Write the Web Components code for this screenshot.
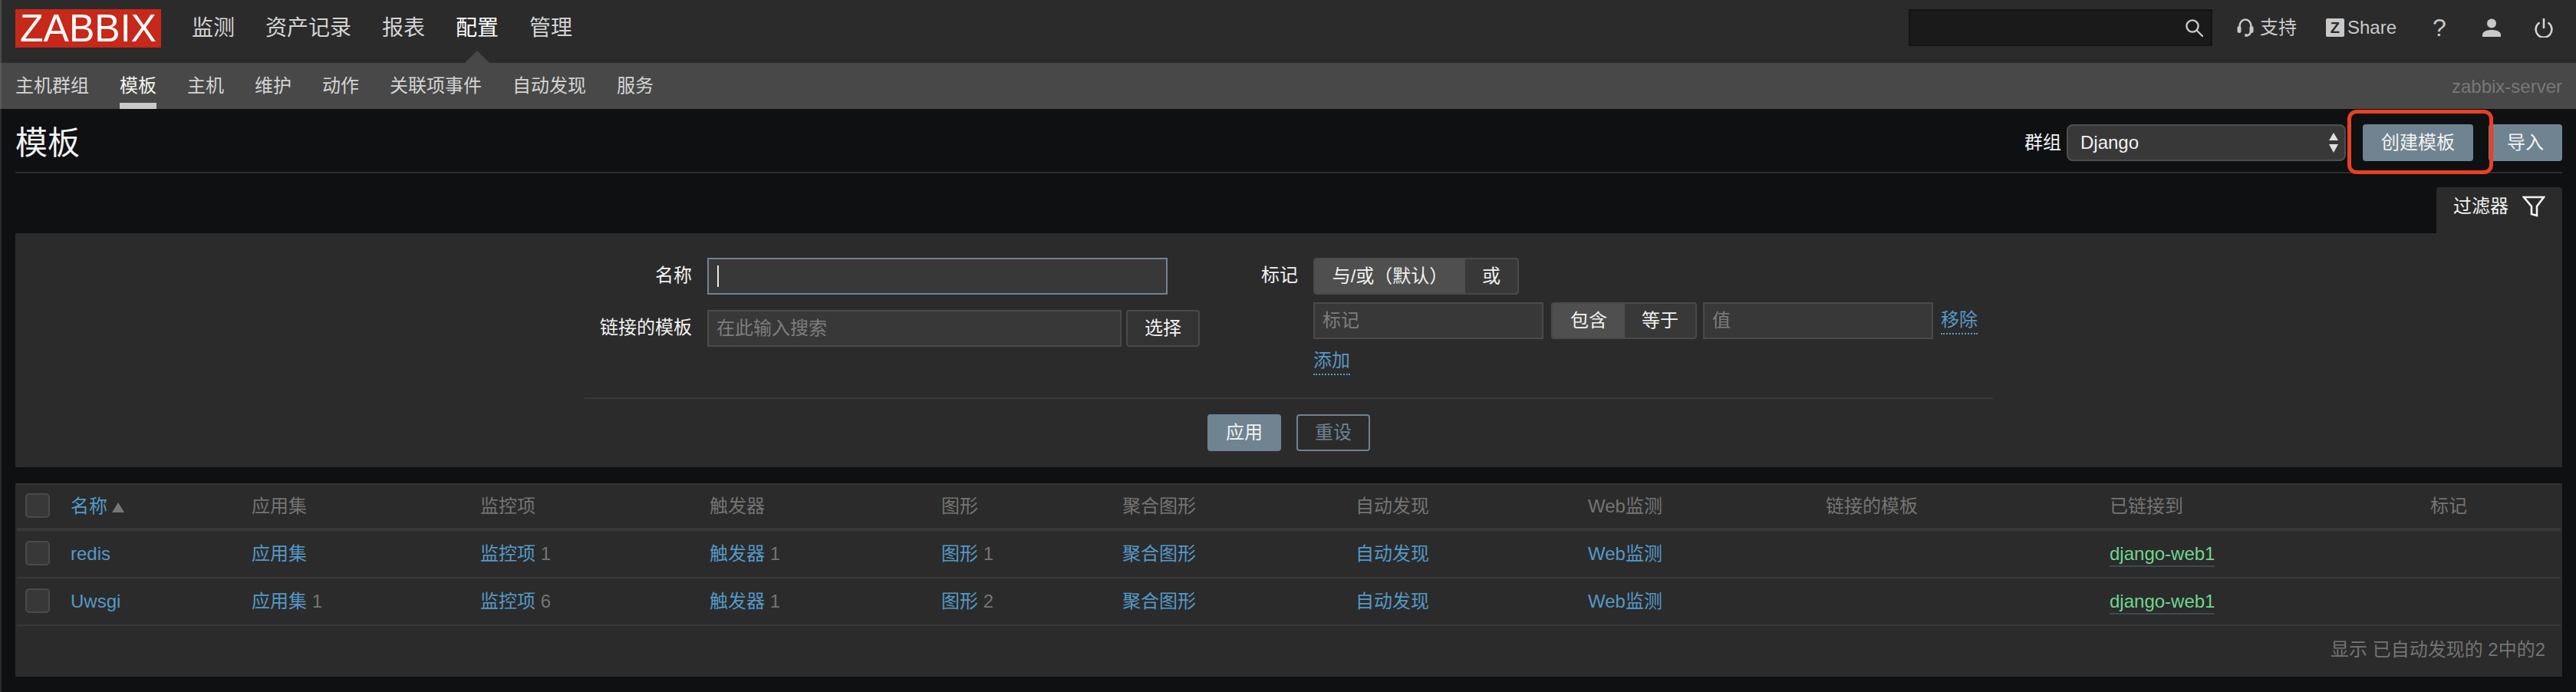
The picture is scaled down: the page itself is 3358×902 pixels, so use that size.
<!DOCTYPE html>
<html lang="zh">
<head>
<meta charset="utf-8">
<title>模板</title>
<style>
  html, body { margin: 0; padding: 0; background: #0e1012; }
  body {
    width: 3358px;
    font: 24px/32px "Liberation Sans", "Noto Sans CJK SC", sans-serif;
    color: #f2f2f2;
  }
</style>
</head>
<body>
<zbx-topbar>
  <zbx-menu-item>监测</zbx-menu-item>
  <zbx-menu-item>资产记录</zbx-menu-item>
  <zbx-menu-item>报表</zbx-menu-item>
  <zbx-menu-item active>配置</zbx-menu-item>
  <zbx-menu-item>管理</zbx-menu-item>
</zbx-topbar>
<zbx-subbar>
  <zbx-sub-item>主机群组</zbx-sub-item>
  <zbx-sub-item active>模板</zbx-sub-item>
  <zbx-sub-item>主机</zbx-sub-item>
  <zbx-sub-item>维护</zbx-sub-item>
  <zbx-sub-item>动作</zbx-sub-item>
  <zbx-sub-item>关联项事件</zbx-sub-item>
  <zbx-sub-item>自动发现</zbx-sub-item>
  <zbx-sub-item>服务</zbx-sub-item>
</zbx-subbar>
<zbx-page>
  <zbx-page-header></zbx-page-header>
  <zbx-filter></zbx-filter>
  <zbx-templates></zbx-templates>
</zbx-page>

<script>
class ZbxButton extends HTMLElement {
    constructor() {
        super();
        this.attachShadow({mode: "open"}).innerHTML = `
          <style>
            :host { display: block; width: 96px; height: 48px; box-sizing: border-box; border-radius: 4px;
                    background: #6f8391; color: #f2f2f2; text-align: center; line-height: 47px; }
            :host([wide]) { width: 144px; }
            :host([outline]) { background: transparent; border: 2px solid #6f8391; color: #6f8391; line-height: 43px; }
            :host([plain]) { background: #333; border: 2px solid #4a4a4a; line-height: 43px; }
          </style><slot></slot>`;
    }
}
customElements.define("zbx-button", ZbxButton);

class ZbxInput extends HTMLElement {
    constructor() {
        super();
        this.attachShadow({mode: "open"}).innerHTML = `
          <style>
            :host { display: block; height: 48px; box-sizing: border-box; border: 2px solid #4a4a4a; background: #383838;
                    color: #7e7e7e; padding-left: 10px; line-height: 43px; }
            :host([focused]) { border-color: #6f8391; }
            .caret { display: none; width: 2px; height: 28px; background: #e8e8e8; margin: 8px 0 0 1px; }
            :host([focused]) .caret { display: block; }
          </style><div class="caret"></div><slot></slot>`;
    }
}
customElements.define("zbx-input", ZbxInput);

class ZbxSegment extends HTMLElement {
    constructor() {
        super();
        this.attachShadow({mode: "open"}).innerHTML = `
          <style>
            :host { display: flex; height: 48px; box-sizing: border-box; border: 2px solid #4a4a4a; border-radius: 4px;
                    background: #383838; overflow: hidden; }
          </style><slot></slot>`;
    }
}
customElements.define("zbx-segment", ZbxSegment);

class ZbxSegmentItem extends HTMLElement {
    constructor() {
        super();
        this.attachShadow({mode: "open"}).innerHTML = `
          <style>
            :host { display: block; text-align: center; line-height: 43px; color: #f2f2f2; }
            :host([active]) { background: #4f4f4f; }
          </style><slot></slot>`;
    }
}
customElements.define("zbx-segment-item", ZbxSegmentItem);

class ZbxCheckbox extends HTMLElement {
    constructor() {
        super();
        this.attachShadow({mode: "open"}).innerHTML = `
          <style>
            :host { display: block; width: 32px; height: 32px; box-sizing: border-box; border: 2px solid #4a4a4a;
                    border-radius: 5px; background: #383838; }
          </style>`;
    }
}
customElements.define("zbx-checkbox", ZbxCheckbox);

class ZbxMenuItem extends HTMLElement {
    constructor() {
        super();
        this.attachShadow({mode: "open"}).innerHTML = `
          <style>
            :host { display: block; font-size: 28px; color: #d4d4d4; line-height: 73px; }
            :host([active]) { color: #fff; position: relative; }
            :host([active])::after { content: ""; position: absolute; left: 12px; top: 66px;
                    border: solid transparent; border-width: 0 16px 16px; border-bottom-color: #484848; }
          </style><slot></slot>`;
    }
}
customElements.define("zbx-menu-item", ZbxMenuItem);

class ZbxTopbar extends HTMLElement {
    constructor() {
        super();
        this.attachShadow({mode: "open"}).innerHTML = `
          <style>
            :host { display: flex; height: 82px; box-sizing: border-box; background: #2b2b2b; border-left: 2px solid #4a4a4a; }
            .logo { width: 190px; height: 50px; margin: 12px 0 0 18px; background: #c7281a; color: #fff;
                    font: 50px/51px "Liberation Sans", sans-serif; text-align: center; }
            nav { display: flex; gap: 40px; margin-left: 40px; }
            .tools { display: flex; align-items: flex-start; margin-left: auto; padding-right: 30px; color: #c9c9c9; }
            .search { width: 396px; height: 48px; margin-top: 12px; box-sizing: border-box; background: #1a1a1a;
                      border: 2px solid #141414; display: flex; justify-content: flex-end; align-items: center; padding-right: 10px; }
            svg { display: block; }
            .tool { display: flex; align-items: center; height: 72px; }
            .zbox { width: 24px; height: 24px; background: #c9c9c9; color: #2b2b2b; border-radius: 2px; text-align: center;
                    font-weight: bold; font-size: 20px; line-height: 25px; }
            .q { width: 24px; justify-content: center; font-size: 32px; color: #c9c9c9; }
          </style>
          <div class="logo">ZABBIX</div>
          <nav><slot></slot></nav>
          <div class="tools">
            <div class="search">
              <svg width="24" height="24" viewBox="0 0 24 24" fill="none" stroke="#c9c9c9" stroke-width="2.4"><circle cx="10" cy="10" r="7.6"/><path d="M15.5 15.5 L23 23" stroke-linecap="round"/></svg>
            </div>
            <div class="tool" style="margin-left:32px;gap:8px">
              <svg width="22" height="24" viewBox="0 0 22 24" fill="none" stroke="#c9c9c9" stroke-width="2.6"><path d="M3.5 13 V10 a7.5 8.5 0 0 1 15 0 V14 c0 6-3 8-6 8.5"/><rect x="0.5" y="10" width="5" height="9" rx="2.5" fill="#c9c9c9" stroke="none"/><rect x="16.5" y="10" width="5" height="9" rx="2.5" fill="#c9c9c9" stroke="none"/><circle cx="12" cy="22" r="2" fill="#c9c9c9" stroke="none"/></svg>
              <span>支持</span>
            </div>
            <div class="tool" style="margin-left:38px;gap:4px"><div class="zbox">Z</div><span>Share</span></div>
            <div class="tool q" style="margin-left:44px">?</div>
            <div class="tool" style="margin-left:44px">
              <svg width="24" height="24" viewBox="0 0 24 24" fill="#c9c9c9"><circle cx="12" cy="6.5" r="6"/><path d="M0 24 V21.5 C0 17 6 15 12 15 S24 17 24 21.5 V24 Z"/></svg>
            </div>
            <div class="tool" style="margin-left:44px">
              <svg width="24" height="26" viewBox="0 0 24 26" fill="none" stroke="#d4d4d4" stroke-width="2.6"><path d="M12 1 V14"/><path d="M6.5 6.5 a10.4 10.4 0 1 0 11 0"/></svg>
            </div>
          </div>`;
    }
}
customElements.define("zbx-topbar", ZbxTopbar);

class ZbxSubItem extends HTMLElement {
    constructor() {
        super();
        this.attachShadow({mode: "open"}).innerHTML = `
          <style>
            :host { display: block; height: 60px; box-sizing: border-box; line-height: 60px; color: #d4d4d4; }
            :host([active]) { color: #f5f5f5; border-bottom: 8px solid #c9c9c9; }
          </style><slot></slot>`;
    }
}
customElements.define("zbx-sub-item", ZbxSubItem);

class ZbxSubbar extends HTMLElement {
    constructor() {
        super();
        this.attachShadow({mode: "open"}).innerHTML = `
          <style>
            :host { display: flex; height: 60px; background: #484848; border-left: 2px solid #5a5a5a; padding: 0 18px; }
            nav { display: flex; gap: 40px; }
            .server { margin-left: auto; color: #787878; line-height: 62px; }
          </style>
          <nav><slot></slot></nav>
          <div class="server">zabbix-server</div>`;
    }
}
customElements.define("zbx-subbar", ZbxSubbar);

class ZbxPage extends HTMLElement {
    constructor() {
        super();
        this.attachShadow({mode: "open"}).innerHTML = `
          <style>
            :host { display: block; border-left: 2px solid #2b2b2b; padding: 0 18px 20px; }
          </style><slot></slot>`;
    }
}
customElements.define("zbx-page", ZbxPage);

class ZbxPageHeader extends HTMLElement {
    constructor() {
        super();
        this.attachShadow({mode: "open"}).innerHTML = `
          <style>
            :host { display: flex; align-items: flex-start; height: 84px; box-sizing: border-box; padding-top: 20px;
                    border-bottom: 2px solid #2e2e2e; position: relative; }
            h1 { margin: 0; font-size: 42px; font-weight: normal; line-height: 50px; color: #f2f2f2; }
            .controls { display: flex; align-items: center; margin-left: auto; }
            .group { display: flex; justify-content: space-between; align-items: center; width: 364px; height: 48px;
                     box-sizing: border-box; margin: 0 22px 0 7px; padding: 0 8px 0 16px; background: #383838;
                     border: 2px solid #4f4f4f; border-radius: 8px; }
            .mark { position: absolute; right: 90px; top: 1px; width: 190px; height: 84px; box-sizing: border-box;
                    border: 5px solid #ea4023; border-radius: 12px; }
          </style>
          <h1>模板</h1>
          <div class="controls">
            <label>群组</label>
            <div class="group"><span>Django</span>
              <svg width="12" height="26" viewBox="0 0 12 26" fill="#e0e0e0"><path d="M6 0 L12 10 H0 Z M0 15 H12 L6 26 Z"/></svg>
            </div>
            <zbx-button wide>创建模板</zbx-button>
            <zbx-button style="margin-left:20px">导入</zbx-button>
          </div>
          <div class="mark"></div>`;
    }
}
customElements.define("zbx-page-header", ZbxPageHeader);

class ZbxFilter extends HTMLElement {
    constructor() {
        super();
        this.attachShadow({mode: "open"}).innerHTML = `
          <style>
            :host { display: block; margin-top: 18px; }
            .tabs { display: flex; justify-content: flex-end; }
            .tab { display: flex; width: 164px; height: 60px; box-sizing: border-box; padding: 9px 0 0 22px; gap: 18px;
                   background: #2b2b2b; border-radius: 4px 4px 0 0; }
            .panel { height: 305px; box-sizing: border-box; padding: 32px 0 0 742px; background: #2b2b2b; }
            .form { display: flex; height: 150px; }
            .left { display: grid; grid-template-columns: 140px auto; gap: 20px; align-content: start; }
            .right { display: grid; grid-template-columns: 48px auto; gap: 10px 20px; align-content: start; margin-left: 80px; }
            .lbl { text-align: right; line-height: 46px; color: #f2f2f2; }
            .row { display: flex; }
            a { color: #5499c7; border-bottom: 2px dotted #5499c7; line-height: 35px; display: block; height: 35px; }
            .actions { width: 1836px; border-top: 2px solid #383838; display: flex; justify-content: center; gap: 20px; padding-top: 20px; }
          </style>
          <div class="tabs"><div class="tab"><span>过滤器</span>
            <svg width="30" height="30" viewBox="0 0 30 30" fill="none" stroke="#f2f2f2" stroke-width="2.6" style="margin-top:1px"><path d="M2 3 H28 L19 15 V27 L12 25 V15 Z"/></svg>
          </div></div>
          <div class="panel">
            <div class="form">
              <div class="left">
                <div class="lbl">名称</div>
                <zbx-input focused style="width:600px"></zbx-input>
                <div class="lbl">链接的模板</div>
                <div class="row">
                  <zbx-input style="width:540px">在此输入搜索</zbx-input>
                  <zbx-button plain style="margin-left:6px">选择</zbx-button>
                </div>
              </div>
              <div class="right">
                <div class="lbl">标记</div>
                <zbx-segment style="width:268px">
                  <zbx-segment-item active style="width:196px">与/或（默认）</zbx-segment-item>
                  <zbx-segment-item style="width:68px">或</zbx-segment-item>
                </zbx-segment>
                <div></div>
                <div class="row">
                  <zbx-input style="width:300px">标记</zbx-input>
                  <zbx-segment style="width:190px;margin-left:10px">
                    <zbx-segment-item active style="width:94px">包含</zbx-segment-item>
                    <zbx-segment-item style="width:92px">等于</zbx-segment-item>
                  </zbx-segment>
                  <zbx-input style="width:300px;margin-left:8px">值</zbx-input>
                  <a style="margin:5px 0 0 10px">移除</a>
                </div>
                <div></div>
                <div class="row"><a>添加</a></div>
              </div>
            </div>
            <div class="actions" style="margin-top:32px">
              <zbx-button>应用</zbx-button>
              <zbx-button outline>重设</zbx-button>
            </div>
          </div>`;
    }
}
customElements.define("zbx-filter", ZbxFilter);

class ZbxTemplates extends HTMLElement {
    constructor() {
        super();
        this.attachShadow({mode: "open"});
        this.columns = ["应用集", "监控项", "触发器", "图形", "聚合图形", "自动发现", "Web监测", "链接的模板", "已链接到", "标记"];
        this.rows = [
            {name: "redis", counts: ["", "1", "1", "1"]},
            {name: "Uwsgi", counts: ["1", "6", "1", "2"]}
        ];
        this.render();
    }

    renderRow(row) {
        const links = ["应用集", "监控项", "触发器", "图形"]
            .map((label, i) => `<td><a>${label}</a> <i>${row.counts[i]}</i></td>`).join("");
        return `<tr>
            <td><zbx-checkbox></zbx-checkbox></td>
            <td><a>${row.name}</a></td>
            ${links}
            <td><a>聚合图形</a></td>
            <td><a>自动发现</a></td>
            <td><a>Web监测</a></td>
            <td></td>
            <td><a class="parent">django-web1</a></td>
            <td></td>
          </tr>`;
    }

    render() {
        const widths = [70, 236, 298, 299, 302, 236, 304, 303, 310, 370, 418, 170];
        this.shadowRoot.innerHTML = `
          <style>
            :host { display: block; margin-top: 21px; padding: 0 2px; height: 252px; background: #2b2b2b; }
            table { table-layout: fixed; width: 3316px; border-collapse: collapse; border-top: 2px solid #333; }
            th, td { padding: 0; text-align: left; font-weight: normal; white-space: nowrap; }
            th { height: 56px; color: #747474; border-bottom: 4px solid #383838; }
            td { height: 60px; border-bottom: 2px solid #383838; }
            th:first-child, td:first-child { padding-left: 11px; }
            th > zbx-checkbox, td > zbx-checkbox { margin-top: -2px; }
            a { color: #5499c7; }
            th a { display: inline-block; }
            i { font-style: normal; color: #747474; }
            .parent { color: #6fd68f; display: inline-block; line-height: 30px; border-bottom: 2px solid #3e4a52; margin-top: 2px; }
            .tri { display: inline-block; margin-left: 6px; border: solid transparent; border-width: 0 8px 13px; border-bottom-color: #777; }
            .foot { text-align: right; color: #747474; padding-right: 20px; line-height: 62px; }
          </style>
          <table>
            <colgroup>${widths.map(w => `<col style="width:${w}px">`).join("")}</colgroup>
            <tr>
              <th><zbx-checkbox></zbx-checkbox></th>
              <th><a>名称</a><span class="tri"></span></th>
              ${this.columns.map(c => `<th>${c}</th>`).join("")}
            </tr>
            ${this.rows.map(r => this.renderRow(r)).join("")}
          </table>
          <div class="foot">显示 已自动发现的 2中的2</div>`;
    }
}
customElements.define("zbx-templates", ZbxTemplates);
</script>
</body>
</html>
